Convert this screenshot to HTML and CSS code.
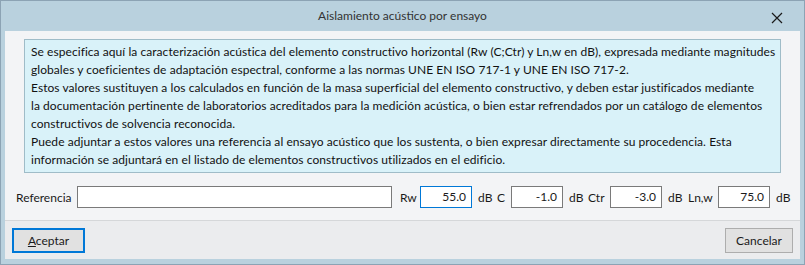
FILE: index.html
```html
<!DOCTYPE html>
<html lang="es">
<head>
    <meta charset="UTF-8">
    <title>Aislamiento acústico por ensayo</title>
    <link rel="stylesheet" href="styles.css">
</head>
<body>
    <div class="window">
        <!-- Title bar -->
        <div class="titlebar">
            <span class="title">Aislamiento acústico por ensayo</span>
            <span class="close">
                <svg width="12" height="12" viewBox="0 0 12 12"><path d="M1 1 L11 11 M11 1 L1 11" stroke="#1a1a1a" stroke-width="1.2" fill="none"/></svg>
            </span>
        </div>

        <div class="client">
            <div class="info">
                Se especifica aquí la caracterización acústica del elemento constructivo horizontal (Rw (C;Ctr) y Ln,w en dB), expresada mediante magnitudes<br>
                globales y coeficientes de adaptación espectral, conforme a las normas UNE EN ISO 717-1 y UNE EN ISO 717-2.<br>
                Estos valores sustituyen a los calculados en función de la masa superficial del elemento constructivo, y deben estar justificados mediante<br>
                la documentación pertinente de laboratorios acreditados para la medición acústica, o bien estar refrendados por un catálogo de elementos<br>
                constructivos de solvencia reconocida.<br>
                Puede adjuntar a estos valores una referencia al ensayo acústico que los sustenta, o bien expresar directamente su procedencia. Esta<br>
                información se adjuntará en el listado de elementos constructivos utilizados en el edificio.
            </div>

            <div class="fields">
                <span class="lbl lbl-ref">Referencia</span>
                <span class="input input-ref"></span>
                <span class="lbl lbl-rw">Rw</span>
                <span class="input num focus">55.0</span>
                <span class="unit">dB</span>
                <span class="lbl lbl-c">C</span>
                <span class="input num">-1.0</span>
                <span class="unit">dB</span>
                <span class="lbl lbl-ctr">Ctr</span>
                <span class="input num">-3.0</span>
                <span class="unit">dB</span>
                <span class="lbl lbl-lnw">Ln,w</span>
                <span class="input num">75.0</span>
                <span class="unit">dB</span>
            </div>

            <div class="footer">
                <button class="btn default"><u>A</u>ceptar</button>
                <button class="btn">Cancelar</button>
            </div>
        </div>
    </div>
</body>
</html>
```

FILE: styles.css
```css
body { margin: 0; font-family: Lato, "Noto Sans", sans-serif; font-size: 12px; color: #1a1a1a; }
.window { width: 805px; height: 265px; box-sizing: border-box; border: 1px solid #8ca3b4; background: #b9d1de; padding: 0 4px 5px 4px; display: flex; flex-direction: column; }
.titlebar { height: 30px; display: flex; align-items: center; justify-content: center; position: relative; }
.title { color: #333; font-size: 12px; margin-top: -1px; }
.close { position: absolute; right: 17px; top: 11px; width: 12px; height: 12px; }
.client { flex: 1; background: #f3f4f6; display: flex; flex-direction: column; }
.info { margin: 8px 19px 0 19px; border: 1px solid #9fbcc8; background: #d9f2f9; padding: 3px 6px; line-height: 18px; white-space: nowrap; color: #111; letter-spacing: 0.06px; }
.fields { display: flex; align-items: center; height: 22px; margin-top: 13px; padding-left: 11px; }
.lbl, .unit { box-sizing: border-box; white-space: nowrap; }
.lbl-ref { width: 61px; }
.lbl-rw { width: 28px; padding-left: 8px; }
.lbl-c { width: 14px; }
.lbl-ctr { width: 22px; }
.lbl-lnw { width: 31px; padding-left: 1px; }
.unit { width: 25px; padding-left: 6px; }
.input { box-sizing: border-box; height: 22px; width: 52px; background: #fff; border: 1px solid #7a7a7a; padding: 0 5px; line-height: 19px; }
.input-ref { width: 315px; }
.num { text-align: right; }
.focus { border-color: #0078d7; }
.footer { margin-top: 12px; border-top: 1px solid #d5d7d9; background: #ebecee; flex: 1; display: flex; justify-content: space-between; align-items: flex-start; padding: 7px 7px 0 7px; }
.btn { box-sizing: border-box; height: 25px; width: 68px; background: #e1e1e1; border: 1px solid #adadad; font-family: inherit; font-size: 12px; color: #1a1a1a; padding: 0; }
.default { width: 73px; border: 2px solid #0078d7; }
```
